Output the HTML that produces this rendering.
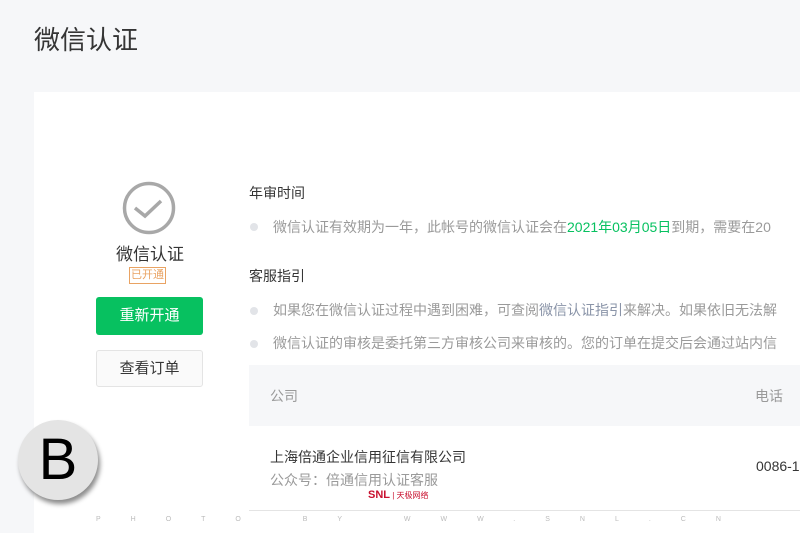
<!DOCTYPE html>
<html><head><meta charset="utf-8"><style>
html,body{margin:0;width:800px;height:533px;overflow:hidden}
body{background:#f6f7f9;font-family:"Liberation Sans","Noto Sans CJK SC",sans-serif;position:relative}
.a{position:absolute;white-space:nowrap}
.card{position:absolute;left:34px;top:92px;width:766px;height:441px;background:#fff}
.dot{position:absolute;width:8px;height:8px;border-radius:50%;background:#e2e4e8}
.g{color:#9a9a9a;font-size:14px}
</style></head><body>
<div class="a" style="left:34px;top:20px;font-size:26px;color:#353535">微信认证</div>
<div class="card"></div>
<svg class="a" style="left:122px;top:181px" width="54" height="54"><circle cx="27" cy="27" r="24.5" fill="none" stroke="#a8a8a8" stroke-width="3.5"/><path d="M13 27 L23 35 L39 20" fill="none" stroke="#a8a8a8" stroke-width="3.5"/></svg>
<div class="a" style="left:116px;top:240px;font-size:17px;color:#353535">微信认证</div>
<div class="a" style="left:129px;top:267px;font-size:11px;color:#e9a363;border:1px solid #e9a363;line-height:15px;padding:0 1px">已开通</div>
<div class="a" style="left:96px;top:297px;width:107px;height:38px;background:#07c160;border-radius:3px;color:#fff;font-size:15px;line-height:38px;text-align:center">重新开通</div>
<div class="a" style="left:96px;top:350px;width:105px;height:35px;background:#fafafa;border:1px solid #e4e4e4;border-radius:3px;color:#353535;font-size:15px;line-height:35px;text-align:center">查看订单</div>
<div class="a" style="left:249px;top:183px;font-size:14px;color:#353535">年审时间</div>
<div class="dot" style="left:250px;top:223px"></div>
<div class="a g" style="left:273px;top:217px">微信认证有效期为一年，此帐号的微信认证会在<span style="color:#07c160">2021年03月05日</span>到期，需要在20</div>
<div class="a" style="left:249px;top:266px;font-size:14px;color:#353535">客服指引</div>
<div class="dot" style="left:250px;top:307px"></div>
<div class="a g" style="left:273px;top:300px">如果您在微信认证过程中遇到困难，可查阅<span style="color:#8a94a8">微信认证指引</span>来解决。如果依旧无法解</div>
<div class="dot" style="left:250px;top:340px"></div>
<div class="a g" style="left:273px;top:333px">微信认证的审核是委托第三方审核公司来审核的。您的订单在提交后会通过站内信</div>
<div class="a" style="left:249px;top:365px;width:560px;height:61px;background:#f6f7f9"></div>
<div class="a g" style="left:270px;top:386px">公司</div>
<div class="a g" style="left:755px;top:386px">电话</div>
<div class="a" style="left:270px;top:447px;font-size:14px;color:#353535">上海倍通企业信用征信有限公司</div>
<div class="a g" style="left:270px;top:470px">公众号：倍通信用认证客服</div>
<div class="a" style="left:756px;top:458px;font-size:14px;color:#353535">0086-1</div>
<div class="a" style="left:368px;top:489px;font-size:11px;color:#c8102e;font-weight:bold">SNL<span style="font-weight:normal;font-size:8px"> | 天极网络</span></div>
<div class="a" style="left:249px;top:510px;width:560px;height:1px;background:#e4e4e4"></div>
<div class="a" style="left:96px;top:516px;font-size:7px;color:#bbb;letter-spacing:30px">PHOTO BY WWW.SNL.CN</div>
<div class="a" style="left:18px;top:420px;width:80px;height:80px;border-radius:50%;background:#e4e4e4;box-shadow:2px 4px 5px rgba(0,0,0,.45);font-size:58px;line-height:80px;text-align:center;color:#000">B</div>
</body></html>
